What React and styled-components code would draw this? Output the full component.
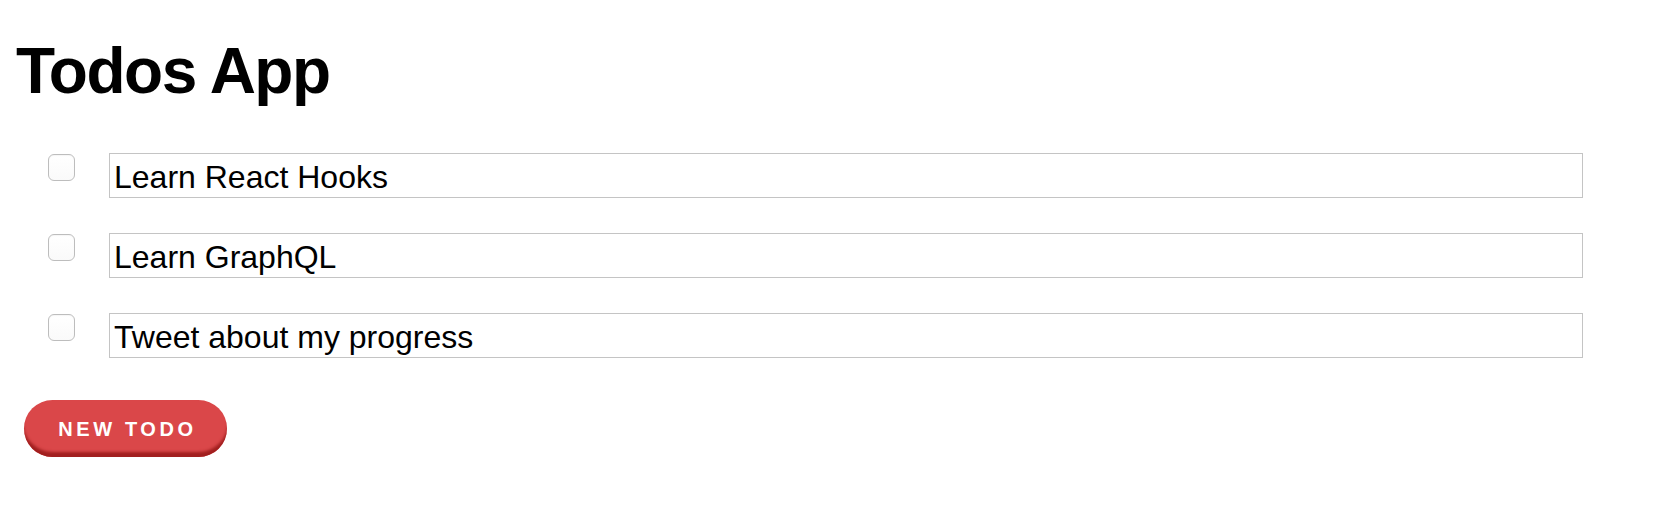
import React from "react";
import styled, { createGlobalStyle } from "styled-components";

const GlobalStyle = createGlobalStyle`
  body {
    margin: 0;
    background: #fff;
    font-family: "Liberation Sans", Arial, Helvetica, sans-serif;
    color: #000;
  }
`;

const todos = [
  { id: 1, text: "Learn React Hooks", done: false },
  { id: 2, text: "Learn GraphQL", done: false },
  { id: 3, text: "Tweet about my progress", done: false },
];

function App() {
  return (
    <Container>
      <GlobalStyle />
      <Title>Todos App</Title>
      <List>
        {todos.map((todo) => (
          <Row key={todo.id}>
            <Check type="checkbox" defaultChecked={todo.done} />
            <TodoInput type="text" defaultValue={todo.text} />
          </Row>
        ))}
      </List>
      <NewButton>New Todo</NewButton>
    </Container>
  );
}

const Container = styled.div`
  padding: 35px 16px 0;
`;

const Title = styled.h1`
  margin: 0;
  font-size: 64px;
  line-height: 73.6px;
  font-weight: 700;
  letter-spacing: -1.5px;
`;

const List = styled.div`
  display: flex;
  flex-direction: column;
  gap: 35px;
  margin-top: 44px;
  padding: 0 65px 0 32px;
`;

const Row = styled.div`
  display: flex;
  align-items: flex-start;
  gap: 34px;
`;

const Check = styled.input`
  appearance: none;
  flex: 0 0 27px;
  width: 27px;
  height: 27px;
  margin: 1px 0 0;
  border: 1.5px solid #bdbdbd;
  border-radius: 6px;
  background: linear-gradient(#fff, #fafafa);
  box-shadow: inset 0 1px 1px rgba(0, 0, 0, 0.04);
`;

const TodoInput = styled.input`
  flex: 1;
  height: 45px;
  box-sizing: border-box;
  padding: 5px 4px 1px;
  border: 1.5px solid #c4c4c4;
  border-radius: 0;
  font-family: "Liberation Sans", Arial, Helvetica, sans-serif;
  font-size: 32px;
  color: #000;
  outline: none;
`;

const NewButton = styled.button`
  display: block;
  margin: 42px 0 0 8px;
  width: 203px;
  height: 57px;
  padding: 3px 0 0 4px;
  border: none;
  border-radius: 29px;
  background: #da4749;
  box-shadow: inset 0 -6px 3px -1px #a11f1f;
  color: #fff;
  font-family: "Liberation Sans", Arial, Helvetica, sans-serif;
  font-size: 20px;
  font-weight: 700;
  letter-spacing: 3.6px;
  text-transform: uppercase;
  cursor: pointer;
`;

export default App;
